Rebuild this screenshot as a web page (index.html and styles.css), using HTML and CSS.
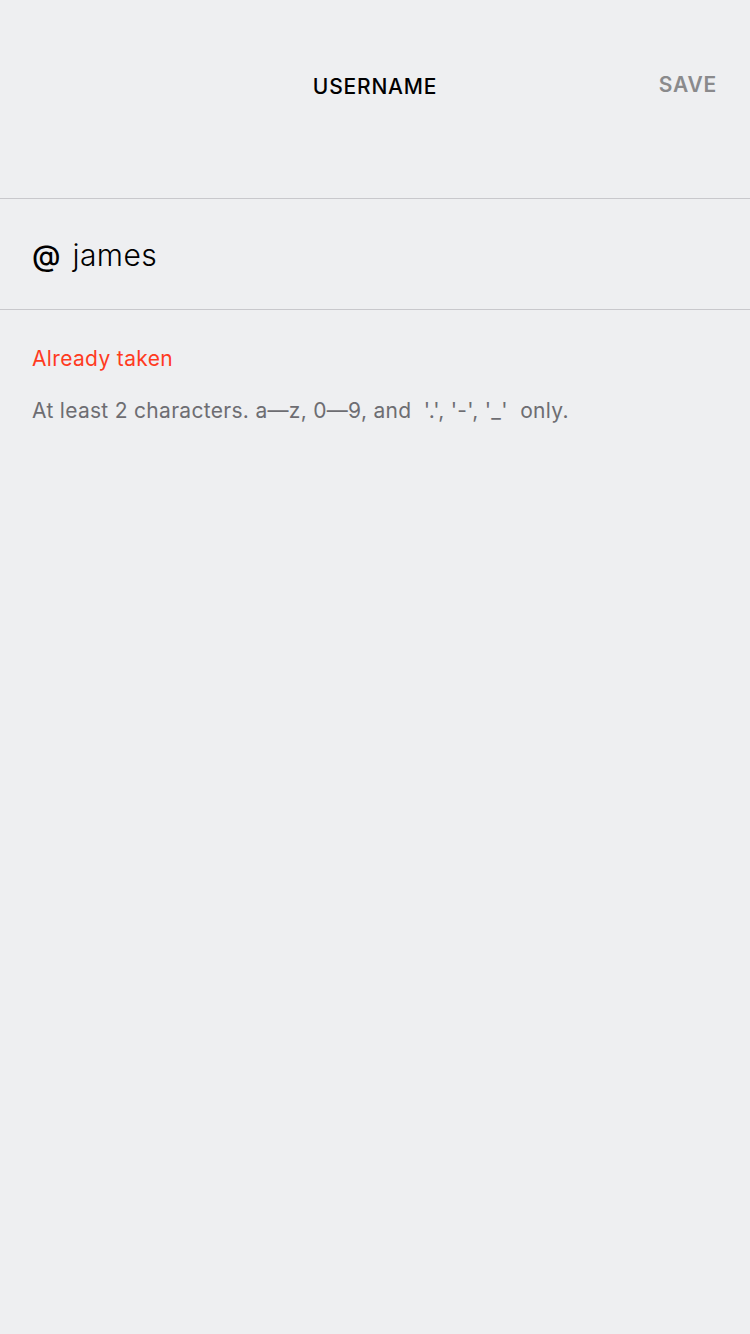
FILE: index.html
```html
<!DOCTYPE html>
<html>
<head>
<meta charset="utf-8">
<link rel="stylesheet" href="styles.css">
</head>
<body>
<div class="screen">
  <header class="nav">
    <div class="nav-side"></div>
    <div class="nav-title">USERNAME</div>
    <div class="nav-side nav-action">SAVE</div>
  </header>
  <div class="field">
    <span class="at">@</span>
    <span class="value">james</span>
  </div>
  <div class="notes">
    <div class="error">Already taken</div>
    <div class="hint">At least 2 characters. a—z, 0—9, and&nbsp; '.', '-', '_'&nbsp; only.</div>
  </div>
</div>
</body>
</html>
```
FILE: styles.css
```css
html, body {
  margin: 0;
  padding: 0;
  background: #eeeff1;
}
.screen {
  width: 750px;
  height: 1334px;
  background: #eeeff1;
  font-family: Inter, "Liberation Sans", sans-serif;
  color: #000;
}
.nav {
  height: 199px;
  display: flex;
  align-items: flex-start;
  box-sizing: border-box;
  padding: 73px 33px 0 33px;
  border-bottom: 1px solid #c8c8cc;
}
.nav-side {
  width: 120px;
}
.nav-title {
  flex: 1;
  text-align: center;
  font-size: 21px;
  font-weight: 500;
  letter-spacing: 0.8px;
  line-height: 28px;
}
.nav-action {
  text-align: right;
  font-size: 21px;
  font-weight: 600;
  color: #8a8a8c;
  letter-spacing: 0.8px;
  line-height: 24px;
}
.field {
  display: flex;
  align-items: center;
  padding: 0 32px;
  border-bottom: 1px solid #c8c8cc;
  box-sizing: border-box;
  height: 111px;
}
.at {
  font-size: 29px;
  font-weight: 500;
  margin-right: 12px;
  position: relative;
  top: 1px;
}
.value {
  font-size: 30px;
  font-weight: 300;
  letter-spacing: 0.4px;
  position: relative;
  top: 1px;
}
.notes {
  padding: 35px 32px 0 32px;
}
.error {
  color: #ff3b1f;
  font-size: 21px;
  font-weight: 400;
  letter-spacing: 0.35px;
  line-height: 28px;
}
.hint {
  margin-top: 24px;
  color: #6d6d72;
  font-size: 21px;
  font-weight: 400;
  letter-spacing: 0.3px;
  line-height: 28px;
}
```
